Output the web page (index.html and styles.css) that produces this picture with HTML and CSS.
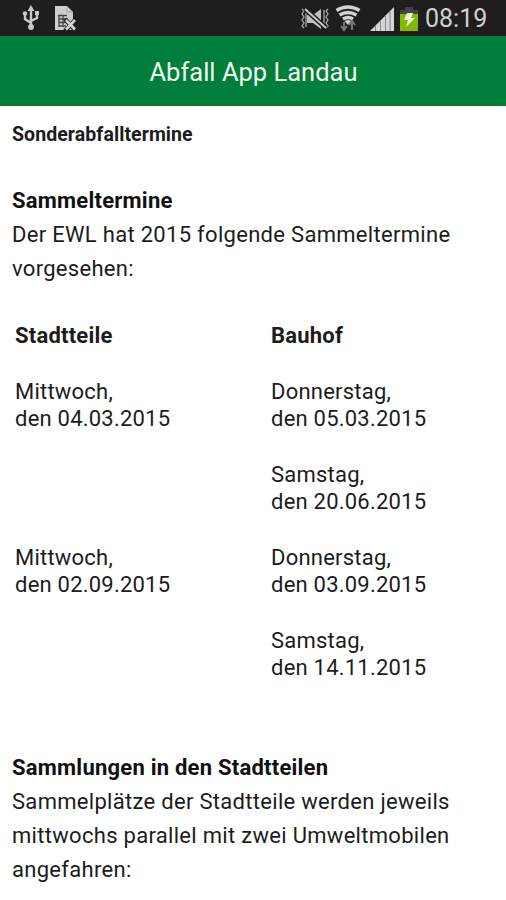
FILE: index.html
```html
<!DOCTYPE html>
<html lang="de">
<head>
<meta charset="utf-8">
<title>Abfall App Landau</title>
<link rel="stylesheet" href="styles.css">
</head>
<body>
<div class="status">
  <div class="status-left">
    <svg width="18" height="26" viewBox="0 0 18 26" fill="none" stroke="#c9c9c9" stroke-width="2.400">
      <path d="M9 5v16M9 18l-6-4v-5M9 16l6-3V9"/>
      <path d="M9 0l3.500 6h-7z" fill="#c9c9c9" stroke="none"/>
      <circle cx="9" cy="22" r="2.900" fill="#c9c9c9" stroke="none"/>
      <circle cx="3" cy="8.500" r="2.200" fill="#c9c9c9" stroke="none"/>
      <path d="M13 6h4v4h-4z" fill="#c9c9c9" stroke="none"/>
    </svg>
    <svg width="22" height="26" viewBox="0 0 22 26">
      <path d="M1 1h12l6 6v10l2 8H1z" fill="#cdcdcd"/>
      <path d="M13 1v6h6" fill="none" stroke="#a5a5a5"/>
      <path d="M4 10.500h9M5 14h7M5 17.500h6M5 21h7M5 10v12M9 10v12" stroke="#444" stroke-width="1.300"/>
      <path d="M11 14l11 12M22 14l-11 12" stroke="#1f1d1e" stroke-width="4.500"/>
      <path d="M12 15l9 9.500M21 15l-9 9.500" stroke="#d4d4d4" stroke-width="2.600"/>
    </svg>
  </div>
  <div class="status-right">
    <svg class="mute" width="30" height="22" viewBox="0 0 30 22">
      <path d="M7 7h6l8-6v20l-8-6H7z" fill="#bfbfbf"/>
      <path d="M2 1l2 2-2 3 2 3-2 3 2 3-2 3 2 2M28 1l-2 2 2 3-2 3 2 3-2 3 2 3-2 2M24 2v17M6 2v17" fill="none" stroke="#a8a8a8" stroke-width="1.300"/>
      <path d="M5 1l21 19" stroke="#1f1d1e" stroke-width="5"/>
      <path d="M5 1l21 19" stroke="#c8c8c8" stroke-width="2"/>
    </svg>
    <svg class="wifi" width="26" height="27" viewBox="0 0 26 27" fill="none" stroke="#d2d2d2" stroke-width="3.400">
      <path d="M1.500 5.500Q13-1.500 24.500 5.500M4.500 10q8.500-5 17 0M8 14q5-3 10 0"/>
      <path d="M9.500 16q3.500-2 7 0L13 20z" fill="#d2d2d2" stroke="none"/>
      <path d="M9 17v7M6 21l3 4 3-4M17 25v-8M14 20l3-4 3 4" stroke="#777" stroke-width="2"/>
    </svg>
    <svg class="signal" width="24" height="24" viewBox="0 0 24 24">
      <path d="M0 24L24 0v24z" fill="#d5d5d5"/>
      <path d="M5.500 18v6M10.500 13v11M15.500 8v16M20 4v20" stroke="#888" stroke-width="1"/>
    </svg>
    <svg class="battery" width="18" height="24" viewBox="0 0 18 24">
      <path d="M5 0h8v3h5v5H0V3h5z" fill="#444"/>
      <path d="M0 7h18v17H0z" fill="#83b900"/>
      <path d="M7 6h6l-2 5h4L6 20l2-7H4z" fill="#eef5df"/>
    </svg>
    <span class="clock">08:19</span>
  </div>
</div>
<header class="bar"><h1>Abfall App Landau</h1></header>
<main>
  <h2 class="page-title">Sonderabfalltermine</h2>
  <section>
    <h3>Sammeltermine</h3>
    <p>Der EWL hat 2015 folgende Sammeltermine<br>vorgesehen:</p>
  </section>
  <div class="dates">
    <b>Stadtteile</b><b>Bauhof</b>
    <div>Mittwoch,<br>den 04.03.2015</div><div>Donnerstag,<br>den 05.03.2015</div>
    <div></div><div>Samstag,<br>den 20.06.2015</div>
    <div>Mittwoch,<br>den 02.09.2015</div><div>Donnerstag,<br>den 03.09.2015</div>
    <div></div><div>Samstag,<br>den 14.11.2015</div>
  </div>
  <section>
    <h3>Sammlungen in den Stadtteilen</h3>
    <p>Sammelplätze der Stadtteile werden jeweils<br>mittwochs parallel mit zwei Umweltmobilen<br>angefahren:</p>
  </section>
</main>
</body>
</html>
```
FILE: styles.css
```css
* { box-sizing: border-box; }
body {
  margin: 0;
  height: 900px;
  overflow: hidden;
  background: #fff;
  color: #1c1c1c;
  font-family: Roboto, "Liberation Sans", sans-serif;
}
h1, h2, h3, p { margin: 0; }
.status {
  height: 36px;
  display: flex;
  justify-content: space-between;
  background: #1f1d1e;
  padding: 0 19px 0 22px;
}
.status-left { display: flex; gap: 14px; padding-top: 5px; }
.status-right { display: flex; align-items: flex-start; }
.mute { margin: 8px 5px 0 0; }
.wifi { margin: 5px 9px 0 0; }
.signal { margin: 7px 6px 0 0; }
.battery { margin: 7px 7px 0 0; }
.clock {
  width: 62px;
  color: #d0d0d0;
  font-size: 25px;
  line-height: 37px;
  white-space: nowrap;
}
.bar {
  height: 70px;
  background: #007e3a;
  border-bottom: 1px solid #087331;
  text-align: center;
}
.bar h1 { color: #f2fbf2; font-size: 25.500px; font-weight: 400; line-height: 72px; padding-left: 1px; }
main { padding: 12px 12px 0; }
.page-title { font-size: 19.500px; font-weight: 700; line-height: 34px; height: 66px; letter-spacing: 0.080px; }
h3 { font-size: 22px; font-weight: 700; line-height: 34px; letter-spacing: 0.230px; color: #111; }
p { font-size: 22px; line-height: 33.700px; letter-spacing: 0.300px; white-space: nowrap; }
.dates {
  display: grid;
  grid-template-columns: 256px 1fr;
  grid-template-rows: 56px repeat(4, 83px);
  padding: 38px 3px 0;
  height: 466px;
  font-size: 22px;
  line-height: 26.800px;
  letter-spacing: 0.220px;
}
```
